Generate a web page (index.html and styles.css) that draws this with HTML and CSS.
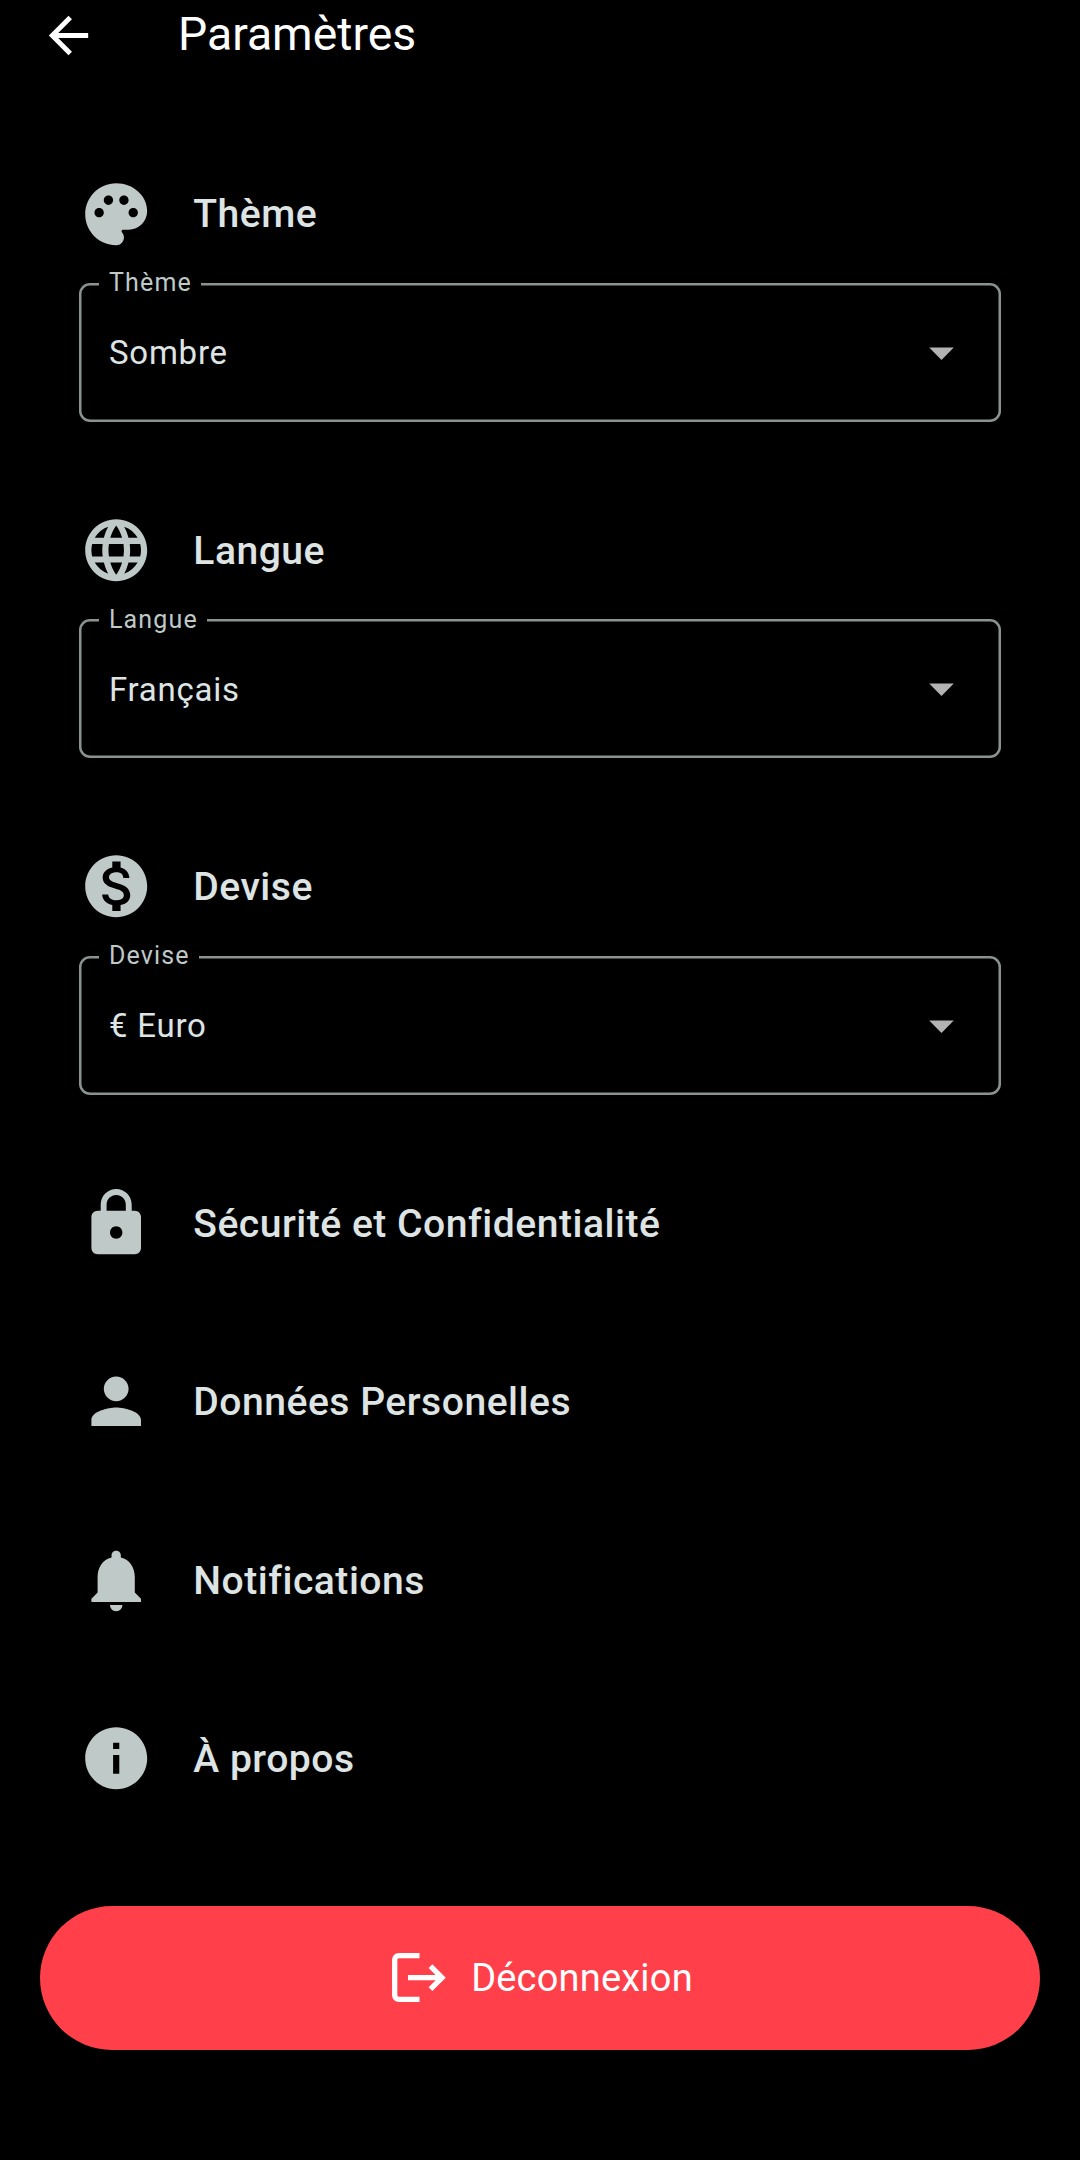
FILE: index.html
```html
<!DOCTYPE html>
<html lang="fr">
<head>
    <meta charset="UTF-8">
    <meta name="viewport" content="width=device-width, initial-scale=1.0">
    <title>Paramètres</title>
    <link rel="stylesheet" href="styles.css">
</head>
<body>
    <header class="header">
        <svg class="back" viewBox="0 0 24 24"><path d="M20 11H7.83l5.59-5.59L12 4l-8 8 8 8 1.41-1.41L7.83 13H20v-2z"/></svg>
        <h1>Paramètres</h1>
    </header>

    <main class="settings">
        <!-- Thème -->
        <section class="group">
            <div class="item">
                <svg class="icon" viewBox="0 0 24 24"><path d="M12 2C6.49 2 2 6.49 2 12s4.49 10 10 10c1.38 0 2.5-1.12 2.5-2.5 0-.61-.23-1.2-.64-1.67-.08-.1-.13-.21-.13-.33 0-.28.22-.5.5-.5H16c3.31 0 6-2.69 6-6 0-4.96-4.49-9-10-9zm-5.5 11c-.83 0-1.5-.67-1.5-1.5S5.67 10 6.5 10 8 10.67 8 11.5 7.33 13 6.5 13zm3-4C8.67 9 8 8.33 8 7.5S8.67 6 9.5 6s1.5.67 1.5 1.5S10.33 9 9.5 9zm5 0c-.83 0-1.5-.67-1.5-1.5S13.67 6 14.5 6s1.5.67 1.5 1.5S15.33 9 14.5 9zm3 4c-.83 0-1.5-.67-1.5-1.5s.67-1.5 1.5-1.5 1.5.67 1.5 1.5-.67 1.5-1.5 1.5z"/></svg>
                <h2>Thème</h2>
            </div>
            <div class="field">
                <span class="label">Thème</span>
                <span class="value">Sombre</span>
                <svg class="arrow" viewBox="0 0 24 24"><path d="M7 10l5 5 5-5z"/></svg>
            </div>
        </section>

        <!-- Langue -->
        <section class="group">
            <div class="item">
                <svg class="icon" viewBox="0 0 24 24"><path d="M11.99 2C6.47 2 2 6.48 2 12s4.47 10 9.99 10C17.52 22 22 17.52 22 12S17.52 2 11.99 2zm6.93 6h-2.95c-.32-1.25-.78-2.45-1.38-3.56 1.84.63 3.37 1.91 4.33 3.56zM12 4.04c.83 1.2 1.48 2.53 1.91 3.96h-3.82c.43-1.43 1.08-2.76 1.91-3.96zM4.26 14C4.1 13.36 4 12.69 4 12s.1-1.36.26-2h3.38c-.08.66-.14 1.32-.14 2 0 .68.06 1.34.14 2H4.26zm.82 2h2.95c.32 1.25.78 2.45 1.38 3.56-1.84-.63-3.37-1.9-4.33-3.56zm2.95-8H5.08c.96-1.66 2.49-2.93 4.33-3.56C8.81 5.55 8.35 6.75 8.03 8zM12 19.96c-.83-1.2-1.48-2.53-1.91-3.96h3.82c-.43 1.43-1.08 2.76-1.91 3.96zM14.34 14H9.66c-.09-.66-.16-1.32-.16-2 0-.68.07-1.35.16-2h4.68c.09.65.16 1.32.16 2 0 .68-.07 1.34-.16 2zm.25 5.56c.6-1.11 1.06-2.31 1.38-3.56h2.95c-.96 1.65-2.49 2.93-4.33 3.56zM16.36 14c.08-.66.14-1.32.14-2 0-.68-.06-1.34-.14-2h3.38c.16.64.26 1.31.26 2s-.1 1.36-.26 2h-3.38z"/></svg>
                <h2>Langue</h2>
            </div>
            <div class="field">
                <span class="label">Langue</span>
                <span class="value">Français</span>
                <svg class="arrow" viewBox="0 0 24 24"><path d="M7 10l5 5 5-5z"/></svg>
            </div>
        </section>

        <!-- Devise -->
        <section class="group">
            <div class="item">
                <svg class="icon" viewBox="0 0 24 24"><path d="M12 2C6.48 2 2 6.48 2 12s4.48 10 10 10 10-4.48 10-10S17.52 2 12 2zm1.41 16.09V20h-2.67v-1.93c-1.71-.36-3.16-1.46-3.27-3.4h1.96c.1 1.05.82 1.87 2.65 1.87 1.96 0 2.4-.98 2.4-1.59 0-.83-.44-1.61-2.67-2.14-2.48-.6-4.18-1.62-4.18-3.67 0-1.72 1.39-2.84 3.11-3.21V4h2.67v1.95c1.86.45 2.79 1.86 2.85 3.39H14.3c-.05-1.11-.64-1.87-2.22-1.87-1.5 0-2.4.68-2.4 1.64 0 .84.65 1.39 2.67 1.91s4.18 1.39 4.18 3.91c-.01 1.83-1.38 2.83-3.12 3.16z"/></svg>
                <h2>Devise</h2>
            </div>
            <div class="field">
                <span class="label">Devise</span>
                <span class="value">€ Euro</span>
                <svg class="arrow" viewBox="0 0 24 24"><path d="M7 10l5 5 5-5z"/></svg>
            </div>
        </section>

        <nav class="links">
            <div class="item">
                <svg class="icon" viewBox="0 0 24 24"><path d="M18 8h-1V6c0-2.76-2.24-5-5-5S7 3.24 7 6v2H6c-1.1 0-2 .9-2 2v10c0 1.1.9 2 2 2h12c1.1 0 2-.9 2-2V10c0-1.1-.9-2-2-2zm-6 9c-1.1 0-2-.9-2-2s.9-2 2-2 2 .9 2 2-.9 2-2 2zm3.1-9H8.9V6c0-1.71 1.39-3.1 3.1-3.1 1.71 0 3.1 1.39 3.1 3.1v2z"/></svg>
                <h2>Sécurité et Confidentialité</h2>
            </div>
            <div class="item">
                <svg class="icon" viewBox="0 0 24 24"><path d="M12 12c2.21 0 4-1.79 4-4s-1.79-4-4-4-4 1.79-4 4 1.79 4 4 4zm0 2c-2.67 0-8 1.34-8 4v2h16v-2c0-2.66-5.33-4-8-4z"/></svg>
                <h2>Données Personelles</h2>
            </div>
            <div class="item">
                <svg class="icon" viewBox="0 0 24 24"><path d="M12 22c1.1 0 2-.9 2-2h-4c0 1.1.89 2 2 2zm6-6v-5c0-3.07-1.64-5.64-4.5-6.32V4c0-.83-.67-1.5-1.5-1.5s-1.5.67-1.5 1.5v.68C7.63 5.36 6 7.92 6 11v5l-2 2v1h16v-1l-2-2z"/></svg>
                <h2>Notifications</h2>
            </div>
            <div class="item">
                <svg class="icon" viewBox="0 0 24 24"><path d="M12 2C6.48 2 2 6.48 2 12s4.48 10 10 10 10-4.48 10-10S17.52 2 12 2zm1 15h-2v-6h2v6zm0-8h-2V7h2v2z"/></svg>
                <h2>À propos</h2>
            </div>
        </nav>
    </main>

    <button class="logout">
        <svg viewBox="0 0 54 49">
            <path d="M27.5 2.7H6.7a4 4 0 0 0-4 4v35.6a4 4 0 0 0 4 4h20.8"/>
            <path d="M16 24.7h34M38.5 13.2L50 24.7 38.5 36.2"/>
        </svg>
        Déconnexion
    </button>
</body>
</html>
```
FILE: styles.css
```css
* {
    box-sizing: border-box;
}

body {
    margin: 0;
    height: 2160px;
    overflow: hidden;
    background-color: #000;
    color: #dde4e3;
    font-family: Roboto, "Noto Sans", sans-serif;
}

.header {
    display: flex;
    align-items: center;
    height: 70px;
    padding-left: 39px;
    color: #fff;
}

.back {
    width: 59px;
    height: 59px;
    fill: #fff;
}

h1 {
    margin: 0 0 3px 80px;
    font-size: 46.3px;
    font-weight: 400;
    line-height: 60px;
}

.settings {
    padding: 106.8px 79px 0 79px;
}

.group {
    margin-bottom: 91.3px;
}

.item {
    display: flex;
    align-items: center;
    gap: 39.6px;
    height: 74.4px;
}

.icon {
    width: 74.4px;
    height: 74.4px;
    flex: none;
    margin: -0.6px 0 0 0.3px;
    fill: #bec9c8;
}

h2 {
    margin: 1px 0 0;
    font-size: 39.1px;
    font-weight: 500;
    letter-spacing: 0.5px;
    line-height: 56px;
}

.field {
    position: relative;
    display: flex;
    align-items: center;
    justify-content: space-between;
    height: 139px;
    margin-top: 31.8px;
    padding: 0 30px;
    border-radius: 11px;
    box-shadow: inset 0 0 0 2.5px #899392;
}

/* label sits over the top border */
.label {
    position: absolute;
    top: -15.6px;
    left: 20px;
    padding: 0 9px 0 10px;
    background-color: #000;
    color: #bec9c8;
    font-size: 25px;
    letter-spacing: 1.15px;
    line-height: 32px;
}

.value {
    margin-top: 1px;
    font-size: 33px;
    letter-spacing: 0.75px;
}

.arrow {
    width: 59px;
    height: 59px;
    fill: #b3b3b3;
}

.links {
    display: flex;
    flex-direction: column;
    gap: 103.9px;
}

.logout {
    display: flex;
    align-items: center;
    justify-content: center;
    gap: 25px;
    width: 1000px;
    height: 143.5px;
    margin: 111px auto 0;
    padding: 0 0 1px 5px;
    border: none;
    border-radius: 72px;
    background-color: #ff404b;
    color: #fff;
    font-family: inherit;
    font-size: 38px;
    letter-spacing: 0.2px;
}

.logout svg {
    width: 54px;
    height: 49px;
    fill: none;
    stroke: #fff;
    stroke-width: 5.3;
}
```
